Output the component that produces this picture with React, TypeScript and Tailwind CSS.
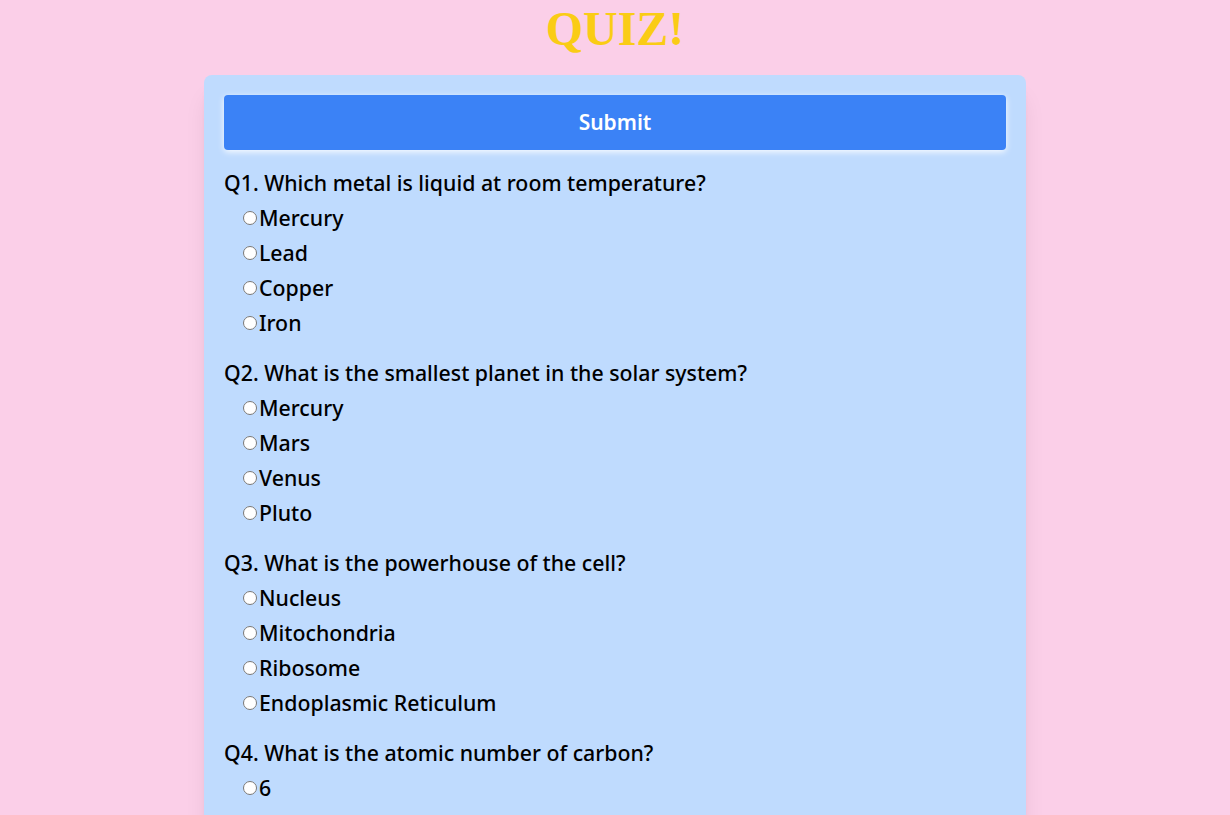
import React from 'react';

const questions = [
  {
    q: 'Q1. Which metal is liquid at room temperature?',
    options: ['Mercury', 'Lead', 'Copper', 'Iron'],
  },
  {
    q: 'Q2. What is the smallest planet in the solar system?',
    options: ['Mercury', 'Mars', 'Venus', 'Pluto'],
  },
  {
    q: 'Q3. What is the powerhouse of the cell?',
    options: ['Nucleus', 'Mitochondria', 'Ribosome', 'Endoplasmic Reticulum'],
  },
  {
    q: 'Q4. What is the atomic number of carbon?',
    options: ['6', '12', '14', '8'],
  },
];

export default function App() {
  return (
    <div className="min-h-screen bg-[#fbcfe8] pt-[5px] pb-10">
      <h1 className="text-center text-5xl leading-none font-bold text-[#facc15] font-['Liberation_Serif',serif]">
        QUIZ!
      </h1>
      <div className="mx-auto mt-[22px] w-[822px] rounded-lg bg-[#bfdbfe] p-5 shadow-xl font-['Noto_Sans',sans-serif]">
        <button className="h-[55px] w-full rounded-sm bg-[#3b82f6] text-[21px] font-semibold text-white shadow-[0_2px_6px_rgba(255,255,255,0.9)]">
          Submit
        </button>
        <div className="mt-[15px]">
          {questions.map((item, qi) => (
            <div key={qi} className="mb-[15px]">
              <p className="text-[21.3px] leading-[35px] font-medium text-black">{item.q}</p>
              <div className="pl-[14px]">
                {item.options.map((opt) => (
                  <label key={opt} className="flex h-[35px] items-center text-[21.3px] font-medium text-black">
                    <input type="radio" name={`q${qi}`} className="mt-0 mr-[2px] ml-[5px] h-[14px] w-[14px]" />
                    {opt}
                  </label>
                ))}
              </div>
            </div>
          ))}
        </div>
      </div>
    </div>
  );
}
